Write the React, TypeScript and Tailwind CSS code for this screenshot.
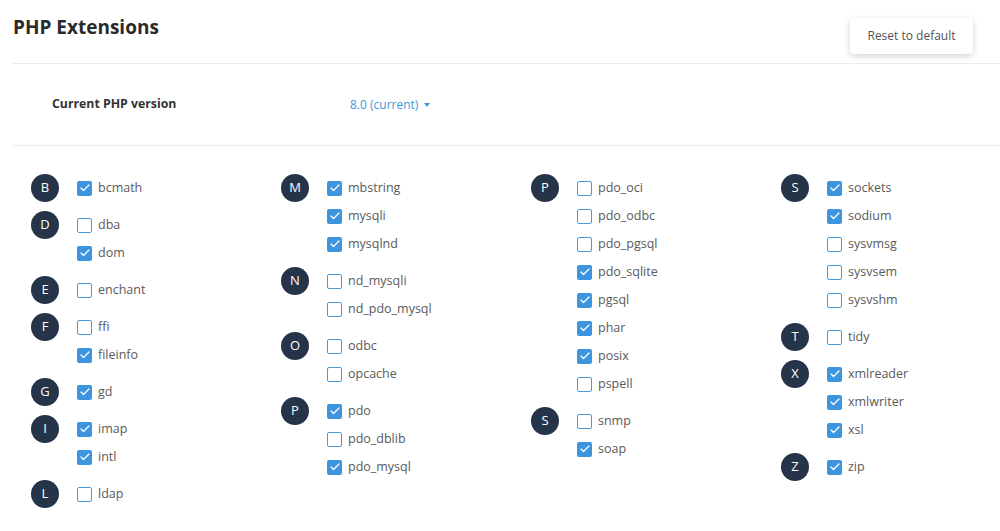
import { Check } from "lucide-react";

interface Group {
  letter: string;
  items: [string, boolean][];
}

const columns: Group[][] = [
  [
    { letter: "B", items: [["bcmath", true]] },
    { letter: "D", items: [["dba", false], ["dom", true]] },
    { letter: "E", items: [["enchant", false]] },
    { letter: "F", items: [["ffi", false], ["fileinfo", true]] },
    { letter: "G", items: [["gd", true]] },
    { letter: "I", items: [["imap", true], ["intl", true]] },
    { letter: "L", items: [["ldap", false]] },
  ],
  [
    { letter: "M", items: [["mbstring", true], ["mysqli", true], ["mysqlnd", true]] },
    { letter: "N", items: [["nd_mysqli", false], ["nd_pdo_mysql", false]] },
    { letter: "O", items: [["odbc", false], ["opcache", false]] },
    { letter: "P", items: [["pdo", true], ["pdo_dblib", false], ["pdo_mysql", true]] },
  ],
  [
    {
      letter: "P",
      items: [
        ["pdo_oci", false],
        ["pdo_odbc", false],
        ["pdo_pgsql", false],
        ["pdo_sqlite", true],
        ["pgsql", true],
        ["phar", true],
        ["posix", true],
        ["pspell", false],
      ],
    },
    { letter: "S", items: [["snmp", false], ["soap", true]] },
  ],
  [
    {
      letter: "S",
      items: [
        ["sockets", true],
        ["sodium", true],
        ["sysvmsg", false],
        ["sysvsem", false],
        ["sysvshm", false],
      ],
    },
    { letter: "T", items: [["tidy", false]] },
    { letter: "X", items: [["xmlreader", true], ["xmlwriter", true], ["xsl", true]] },
    { letter: "Z", items: [["zip", true]] },
  ],
];

const Box = ({ checked }: { checked: boolean }) =>
  checked ? (
    <span className="w-[15px] h-[15px] rounded-[2px] bg-[#3d95e0] flex items-center justify-center">
      <Check size={12} strokeWidth={2.5} className="text-white" />
    </span>
  ) : (
    <span className="w-[15px] h-[15px] rounded-[2px] border-[1.5px] border-[#4a9ad8] bg-white" />
  );

const App = () => {
  return (
    <div
      className="w-[1000px] h-[531px] bg-white overflow-hidden text-[#555]"
      style={{ fontFamily: '"Open Sans", sans-serif' }}
    >
      {/* Header */}
      <div className="flex justify-between ml-[12px] pl-[1px] pr-[27px] h-[64px] border-b border-[#ececec]">
        <h1 className="text-[19px] font-bold text-[#2a2a2a] mt-[13px] leading-[28px]">PHP Extensions</h1>
        <button className="mt-[18px] h-[36px] w-[123px] bg-white rounded-[3px] shadow-[0_2px_6px_rgba(0,0,0,0.18)] text-[12px] text-[#555]">
          Reset to default
        </button>
      </div>

      {/* Version row */}
      <div className="ml-[12px] h-[82px] flex items-center border-b border-[#ececec]">
        <div className="w-[338px] pl-[40px] text-[12.3px] font-bold text-[#333]">Current PHP version</div>
        <div className="flex items-center gap-[6px] text-[12px] text-[#3d9ad6]">
          8.0 (current)
          <span className="w-0 h-0 border-l-[3.5px] border-r-[3.5px] border-t-[4px] border-l-transparent border-r-transparent border-t-[#3d9ad6]" />
        </div>
      </div>

      {/* Extensions grid */}
      <div className="grid grid-cols-[250px_250px_250px_250px] pl-[31px] pt-[28px]">
        {columns.map((col, ci) => (
          <div key={ci} className="flex flex-col gap-[9px]">
            {col.map((g, gi) => (
              <div key={gi} className="flex gap-[18px]">
                <div className="w-[28px] h-[28px] rounded-full bg-[#26344a] text-white text-[13px] font-normal flex items-center justify-center">
                  {g.letter}
                </div>
                <div className="flex flex-col">
                  {g.items.map(([name, checked]) => (
                    <label key={name} className="h-[28px] flex items-center gap-[6px] text-[12.5px] text-[#5a5a5a]">
                      <Box checked={checked} />
                      {name}
                    </label>
                  ))}
                </div>
              </div>
            ))}
          </div>
        ))}
      </div>
    </div>
  );
};

export default App;
